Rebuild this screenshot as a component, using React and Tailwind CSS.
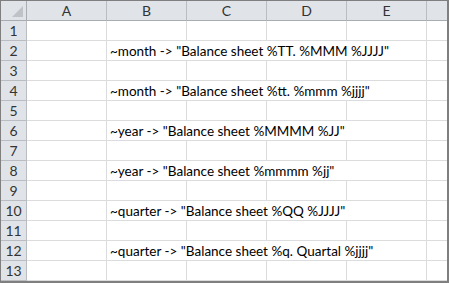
import React from "react";

const cols = ["A", "B", "C", "D", "E", ""];

const rows = [
  null,
  '~month -> "Balance sheet %TT. %MMM %JJJJ"',
  null,
  '~month -> "Balance sheet %tt. %mmm %jjjj"',
  null,
  '~year -> "Balance sheet %MMMM %JJ"',
  null,
  '~year -> "Balance sheet %mmmm %jj"',
  null,
  '~quarter -> "Balance sheet %QQ %JJJJ"',
  null,
  '~quarter -> "Balance sheet %q. Quartal %jjjj"',
  null,
];

const grid = "grid grid-cols-[26px_80px_80px_80px_80px_80px_20px]";
const cell = "h-5 border-r border-b border-[#dadcdd]";

function App() {
  return (
    <div
      className="w-[449px] h-[283px] overflow-hidden bg-white border-t border-l border-r-2 border-b-2 border-[#7f7f7f] text-[14px] text-black"
      style={{ fontFamily: "Lato, 'Liberation Sans', sans-serif" }}
    >
      <div className={`${grid} bg-[#e0e4e9] text-[#333]`}>
        <div className="h-5 border-r border-b border-[#a9adb2] relative">
          <svg className="absolute right-[3px] bottom-[3px]" width="11" height="11" viewBox="0 0 11 11">
            <polygon points="11,0 11,11 0,11" fill="#bfc3c8" />
          </svg>
        </div>
        {cols.map((c, i) => (
          <div
            key={i}
            className={`h-5 border-b border-[#a9adb2] flex items-center justify-center leading-none ${
              i < 5 ? "border-r border-r-[#b9bdc2]" : ""
            }`}
          >
            {c}
          </div>
        ))}
      </div>
      {rows.map((text, r) => (
        <div key={r} className={grid}>
          <div className="h-5 bg-[#e0e4e9] border-r border-b border-[#b9bdc2] flex items-center justify-center leading-none text-[#333]">
            {r + 1}
          </div>
          <div className={cell} />
          {text ? (
            <div className={`${cell} col-span-4 flex items-end pl-[3px] pb-[2px] leading-none whitespace-nowrap text-[13.5px]`}>
              {text}
            </div>
          ) : (
            <>
              <div className={cell} />
              <div className={cell} />
              <div className={cell} />
              <div className={cell} />
            </>
          )}
          <div className="h-5 border-b border-[#dadcdd]" />
        </div>
      ))}
    </div>
  );
}

export default App;
